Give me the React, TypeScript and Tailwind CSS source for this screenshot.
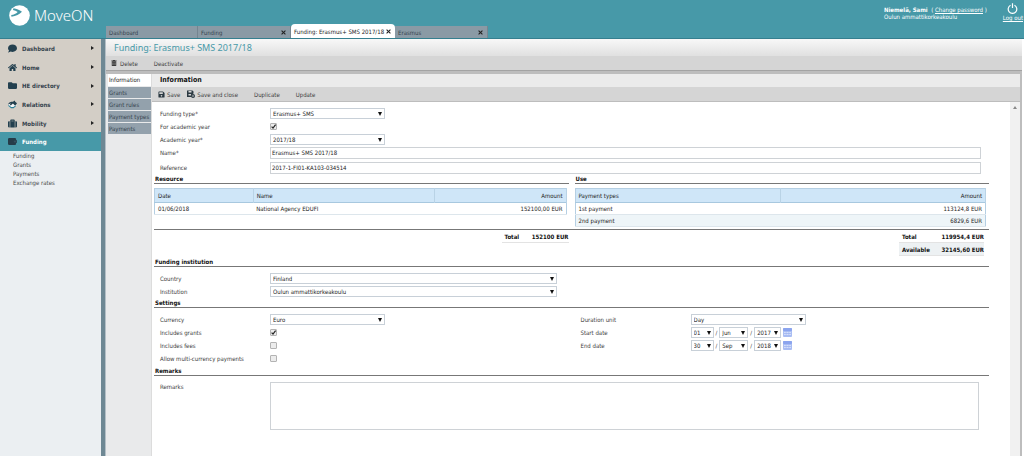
import { useId, useState } from "react";
import type { ReactNode } from "react";
import { FaComment, FaFolder, FaHome, FaSave, FaSuitcase, FaTrashAlt } from "react-icons/fa";
import clsx from "clsx";

function HandshakeIcon({ className }: { className?: string }) {
  return (
    <svg viewBox="0 0 20 18" className={className} aria-hidden="true">
      <path d="M2 6h13l4 5-5 5H5l-4-4z" fill="#f4f6f7" />
      <path d="M0 9c2-5 6-6 11-6l4-3 1 3 4 3-4 6-5-5-5 4-2-2 3-3-4 2z" fill="#23404f" />
      <path d="m1 11 6 5h5l5-4" fill="none" stroke="#2f7f95" strokeWidth="2.500" />
    </svg>
  );
}

function WalletIcon({ className }: { className?: string }) {
  return (
    <svg viewBox="0 0 20 16" className={className} aria-hidden="true">
      <path d="M2 0h14l2 2v3h2v6h-2v3l-2 2H2l-2-2V2z" fill="#263c49" />
      <path d="M13 6h6v4h-6z" fill="#34505e" />
    </svg>
  );
}

const NAV = [
  { label: "Dashboard", icon: FaComment },
  { label: "Home", icon: FaHome },
  { label: "HE directory", icon: FaFolder },
  { label: "Relations", icon: HandshakeIcon },
  { label: "Mobility", icon: FaSuitcase },
  { label: "Funding", icon: WalletIcon, active: true },
];

const SUBNAV = ["Funding", "Grants", "Payments", "Exchange rates"];

const TABS = [
  { label: "Dashboard", width: "w-[92px]" },
  { label: "Funding", width: "w-[93px]", closable: true },
  { label: "Funding: Erasmus+ SMS 2017/18", width: "w-[104px]", closable: true, active: true },
  { label: "Erasmus", width: "w-[93px]", closable: true },
];

const SECTIONS = ["Information", "Grants", "Grant rules", "Payment types", "Payments"];

function Caret({ className }: { className?: string }) {
  return (
    <svg viewBox="0 0 4 4" className={clsx("pointer-events-none size-1", className)} aria-hidden="true">
      <path d="M0 0h4L2 4z" fill="#111" />
    </svg>
  );
}

function Select({ id, value, width, label }: { id?: string; value: string; width: string; label?: string }) {
  return (
    <span className={clsx("relative inline-flex h-[11px] items-center", width)}>
      <select
        id={id}
        aria-label={label}
        defaultValue={value}
        className="h-full w-full appearance-none border border-[#c8d0d8] bg-white pl-[2px] leading-[9px] text-[#222]"
      >
        <option>{value}</option>
      </select>
      <Caret className="absolute right-[3px]" />
    </span>
  );
}

function Row({ label, children }: { label: string; children: (id: string) => ReactNode }) {
  const id = useId();
  return (
    <div className="flex h-[13px] items-center">
      <label htmlFor={id} className="w-[110px] shrink-0">
        {label}
      </label>
      {children(id)}
    </div>
  );
}

function SelectRow({ label, value, width = "w-[115px]" }: { label: string; value: string; width?: string }) {
  return <Row label={label}>{(id) => <Select id={id} value={value} width={width} />}</Row>;
}

function CheckRow({ label, checked = false }: { label: string; checked?: boolean }) {
  const [on, setOn] = useState(checked);
  return (
    <Row label={label}>
      {(id) => (
        <span className="relative inline-flex">
          <input
            id={id}
            type="checkbox"
            checked={on}
            onChange={(e) => setOn(e.target.checked)}
            className="size-[7px] appearance-none rounded-[1px] border border-[#b3b3b3] bg-[#ececec]"
          />
          {on && (
            <svg viewBox="0 0 7 7" className="pointer-events-none absolute inset-0 size-[7px]" aria-hidden="true">
              <path d="M1.6 3.6 3 5.1 5.6 1.7" fill="none" stroke="#222" strokeWidth="1.2" />
            </svg>
          )}
        </span>
      )}
    </Row>
  );
}

function InputRow({ label, value }: { label: string; value: string }) {
  return (
    <Row label={label}>
      {(id) => (
        <input
          id={id}
          defaultValue={value}
          className="h-3 min-w-0 flex-1 border border-[#ced2d6] bg-white px-px leading-[9px] text-[#222]"
        />
      )}
    </Row>
  );
}

function DateRow({ label, day, month, year }: { label: string; day: string; month: string; year: string }) {
  return (
    <Row label={label}>
      {(id) => (
        <span className="flex items-center gap-[2px]">
          <Select id={id} value={day} width="w-[23px]" />
          <span>/</span>
          <Select label={label + " month"} value={month} width="w-[29px]" />
          <span>/</span>
          <Select label={label + " year"} value={year} width="w-[27px]" />
          <button type="button" aria-label={"Pick " + label.toLowerCase()}>
            <svg viewBox="0 0 9 9" className="size-[9px]" aria-hidden="true">
              <rect width="9" height="9" rx="1" fill="#a9bdf3" />
              <rect width="9" height="3" rx="1" fill="#8ba4ee" />
              <path d="M1 4.5h7M1 6.5h7" stroke="#d3defb" strokeWidth="1" />
              <path d="M3.2 3.5v4M5.8 3.5v4" stroke="#9cb2f0" strokeWidth="0.5" />
            </svg>
          </button>
        </span>
      )}
    </Row>
  );
}

function Heading({ children }: { children: ReactNode }) {
  return (
    <h3 className="h-[10px] border-b border-[#777] pl-px leading-[9px] font-bold text-[#111]">{children}</h3>
  );
}

function DataTable({ head, widths, rows }: { head: string[]; widths: string[]; rows: string[][] }) {
  return (
    <table className="w-full table-fixed border border-[#b5cfe3] text-[#222]">
      <thead>
        <tr className="h-[14px] border-b border-[#a8c8df] bg-[#cfe6f8]">
          {head.map((h, i) => (
            <th
              key={h}
              className={clsx(
                "border-r border-[#b9d3e6] px-[3px] font-normal",
                widths[i],
                i === head.length - 1 ? "text-right" : "text-left"
              )}
            >
              {h}
            </th>
          ))}
        </tr>
      </thead>
      <tbody>
        {rows.map((row) => (
          <tr key={row[0]} className="h-3 border-b border-[#dde6ec] even:bg-[#eef5f8]">
            {row.map((cell, i) => (
              <td key={i} className={clsx("px-[3px]", i === row.length - 1 && "text-right")}>
                {cell}
              </td>
            ))}
          </tr>
        ))}
      </tbody>
    </table>
  );
}

function Total({ label, value, shaded }: { label: string; value: string; shaded?: boolean }) {
  return (
    <div
      className={clsx(
        "flex h-[13px] items-center justify-between border-b border-[#e3e3e3] pl-[3px] font-bold text-[#111]",
        shaded && "bg-[#edf1f3]"
      )}
    >
      <span>{label}</span>
      <span>{value}</span>
    </div>
  );
}

function SaveAndClose() {
  return (
    <svg viewBox="0 0 16 16" className="size-2" aria-hidden="true">
      <path d="M0 1h11l2 2v4l-4 3v4H0z" fill="#2b3942" />
      <path d="M3 2h6v3H3zM3 8h5v3H3z" fill="#d5d5d5" />
      <circle cx="12" cy="12" r="4" fill="#2b3942" />
      <path d="m10.3 10.3 3.4 3.4m0-3.4-3.4 3.4" stroke="#ddd" strokeWidth="1" />
    </svg>
  );
}

export default function App() {
  const [section, setSection] = useState("Information");

  return (
    <div className="flex min-h-screen flex-col bg-[#e9eaeb] font-['DejaVu_Sans_Condensed','DejaVu_Sans',sans-serif] text-[6px] leading-[9px] text-[#3c3c3c]">
      <header className="flex h-[39px] items-stretch border-b border-[#357f8f] bg-[#4799a8] text-white">
        <div className="flex w-[106px] shrink-0 items-center gap-1 pb-2 pl-[9px]">
          <svg viewBox="0 0 21 21" className="size-[21px] shrink-0" aria-hidden="true">
            <circle cx="10.5" cy="10.5" r="10.3" fill="#fff" />
            <path d="M4.500 3.200c3 .5 6 1.700 8.500 3.600C10.500 9.500 7 11 2.500 11.800l-.3-1.700c2.600-.4 4.800-1.500 6.500-3.200-1.500-1-3-1.600-4.800-2z" fill="#4799a8" />
          </svg>
          <span className="font-['Noto_Sans',sans-serif] text-[15px] leading-5 font-light">MoveON</span>
        </div>
        <div className="flex flex-1 items-end">
          {TABS.map((t) => (
            <div
              key={t.label}
              className={clsx(
                "flex shrink-0 items-center justify-between pl-[3px]",
                t.width,
                t.active ? "h-[14px] rounded-t-sm bg-white text-[#222]" : "h-3 border-r border-[#758590] bg-[#8a9aa5] text-[#35434d]"
              )}
            >
              <button type="button" className="whitespace-nowrap">{t.label}</button>
              {t.closable && (
                <button type="button" aria-label={"Close " + t.label} className="pr-1">
                  <svg viewBox="0 0 6 6" className="size-[5px]" aria-hidden="true">
                    <path d="m.7.7 4.600 4.600m0-4.600L.7 5.300" stroke="#222" strokeWidth="1.300" />
                  </svg>
                </button>
              )}
            </div>
          ))}
        </div>
        <div className="flex shrink-0 gap-4 pt-[6px] pr-px leading-[7px]">
          <div>
            <p>
              <b>Niemelä, Sami</b>&nbsp; ( <a href="#password" className="underline">Change password</a> )
            </p>
            <p>Oulun ammattikorkeakoulu</p>
          </div>
          <a href="#logout" className="-mt-[3px] flex flex-col items-center underline">
            <svg viewBox="0 0 10 10" className="size-[11px]" aria-hidden="true">
              <path d="M3.200 2.100a3.900 3.900 0 1 0 3.600 0M5 .3v4.200" fill="none" stroke="#fff" strokeWidth="1.100" />
            </svg>
            Log out
          </a>
        </div>
      </header>

      <div className="flex flex-1">
        <aside className="w-[101px] shrink-0 bg-[#ebeff2]">
          <nav className="flex h-[112px] flex-col bg-[#d3cec6]">
            {NAV.map((n) => (
              <a
                key={n.label}
                href="#nav"
                className={clsx(
                  "flex flex-1 items-center pr-[7px] pl-2 font-bold",
                  n.active ? "bg-[#4799a8] text-white" : "text-[#35434d]"
                )}
              >
                <n.icon className="mr-[5px] size-[9px] text-[#23404f]" />
                <span className="flex-1">{n.label}</span>
                {!n.active && (
                  <svg viewBox="0 0 3 4" className="h-1 w-[3px]" aria-hidden="true">
                    <path d="M0 0v4l3-2z" fill="#222" />
                  </svg>
                )}
              </a>
            ))}
          </nav>
          <nav className="flex flex-col pl-[13px] text-[#4a4a4a]">
            {SUBNAV.map((s) => (
              <a key={s} href="#sub">{s}</a>
            ))}
          </nav>
        </aside>
        <div className="w-[5px] shrink-0 border-r border-[#b4bfc6] bg-[#6e8894]" />

        <main className="flex min-w-0 flex-1 flex-col border-r-2 border-white">
          <h1 className="flex h-[17px] items-center bg-linear-to-b from-[#f8f8f8] to-[#e0e0e0] pl-2 font-['Noto_Sans',sans-serif] text-[9px] text-[#4799a8]">
            Funding: Erasmus+ SMS 2017/18
          </h1>
          <div className="flex h-[15px] items-center gap-4 border-b border-[#a3a3a3] bg-[#d5d5d5] pl-[5px]">
            <button type="button" className="flex items-center gap-[3px]">
              <FaTrashAlt className="size-[6px] text-[#333]" /> Delete
            </button>
            <button type="button">Deactivate</button>
          </div>

          <div className="flex flex-1 border-t-[3px] border-r-2 border-[#bdbdbd]">
            <nav className="flex w-[46px] shrink-0 flex-col gap-px border-r border-[#dcdcdc] pl-[2px]">
              {SECTIONS.map((s) => (
                <button
                  key={s}
                  type="button"
                  onClick={() => setSection(s)}
                  className={clsx(
                    "pl-px text-left leading-[11px] whitespace-nowrap",
                    s === section ? "bg-white pb-px text-[#222]" : "bg-[#93a1ac] text-[#35434d]"
                  )}
                >
                  {s}
                </button>
              ))}
            </nav>

            <section className="flex min-w-0 flex-1 flex-col bg-white">
              <h2 className="flex h-[13px] items-center bg-[#ebebeb] pl-2 text-[7px] font-bold text-[#111]">Information</h2>
              <div className="flex h-[15px] items-center gap-4 border-b border-[#bdbdbd] bg-[#d5d5d5] pl-[6px]">
                <div className="flex items-center gap-[7px]">
                  <button type="button" className="flex items-center gap-[2px]">
                    <FaSave className="size-[7px] text-[#2b3942]" /> Save
                  </button>
                  <button type="button" className="flex items-center gap-[2px]">
                    <SaveAndClose /> Save and close
                  </button>
                </div>
                <button type="button">Duplicate</button>
                <button type="button">Update</button>
              </div>

              <div className="flex flex-1">
                <form className="min-w-0 flex-1 pt-[5px] pr-[21px] pb-6 pl-[2px]">
                  <div className="pr-2 pl-[6px]">
                    <SelectRow label="Funding type*" value="Erasmus+ SMS" />
                    <CheckRow label="For academic year" checked />
                    <SelectRow label="Academic year*" value="2017/18" />
                    <InputRow label="Name*" value="Erasmus+ SMS 2017/18" />
                    <div className="pt-[2px]">
                      <InputRow label="Reference" value="2017-1-FI01-KA103-034514" />
                    </div>
                  </div>

                  <div className="grid grid-cols-2 gap-x-[6px] border-b border-[#777] pb-[2px]">
                    <div>
                      <Heading>Resource</Heading>
                      <div className="pt-1 pr-[2px]">
                        <DataTable
                          head={["Date", "Name", "Amount"]}
                          widths={["w-[24%]", "w-[44%]", "w-[32%]"]}
                          rows={[["01/06/2018", "National Agency EDUFI", "152100,00 EUR"]]}
                        />
                      </div>
                    </div>
                    <div>
                      <Heading>Use</Heading>
                      <div className="pt-1 pr-[3px]">
                        <DataTable
                          head={["Payment types", "Amount"]}
                          widths={["w-1/2", "w-1/2"]}
                          rows={[
                            ["1st payment", "113124,8 EUR"],
                            ["2nd payment", "6829,6 EUR"],
                          ]}
                        />
                      </div>
                    </div>
                  </div>
                  <div className="grid grid-cols-2 gap-x-[6px] pb-px">
                    <div className="ml-auto w-[67px]">
                      <Total label="Total" value="152100 EUR" />
                    </div>
                    <div className="mr-[5px] ml-auto w-[85px]">
                      <Total label="Total" value="119954,4 EUR" />
                      <Total label="Available" value="32145,60 EUR" shaded />
                    </div>
                  </div>

                  <Heading>Funding institution</Heading>
                  <div className="pt-[5px] pl-[6px]">
                    <SelectRow label="Country" value="Finland" width="w-[287px]" />
                    <SelectRow label="Institution" value="Oulun ammattikorkeakoulu" width="w-[287px]" />
                  </div>

                  <Heading>Settings</Heading>
                  <div className="grid grid-cols-2 gap-x-[6px] pt-[5px] pb-px">
                    <div className="pl-[6px]">
                      <SelectRow label="Currency" value="Euro" />
                      <CheckRow label="Includes grants" checked />
                      <CheckRow label="Includes fees" />
                      <CheckRow label="Allow multi-currency payments" />
                    </div>
                    <div className="pl-[6px]">
                      <SelectRow label="Duration unit" value="Day" />
                      <DateRow label="Start date" day="01" month="Jun" year="2017" />
                      <DateRow label="End date" day="30" month="Sep" year="2018" />
                    </div>
                  </div>

                  <Heading>Remarks</Heading>
                  <div className="flex pt-[6px] pr-[10px] pl-[6px]">
                    <label htmlFor="remarks" className="w-[110px] shrink-0">Remarks</label>
                    <textarea id="remarks" className="h-12 flex-1 resize-none border border-[#ced2d6] bg-white" />
                  </div>
                </form>
                <div className="w-[10px] shrink-0 bg-[#f1f1f1] pt-1">
                  <svg viewBox="0 0 4 3" className="mx-auto h-[3px] w-1" aria-hidden="true">
                    <path d="M0 3h4L2 0z" fill="#888" />
                  </svg>
                </div>
              </div>
            </section>
          </div>
        </main>
      </div>
    </div>
  );
}
